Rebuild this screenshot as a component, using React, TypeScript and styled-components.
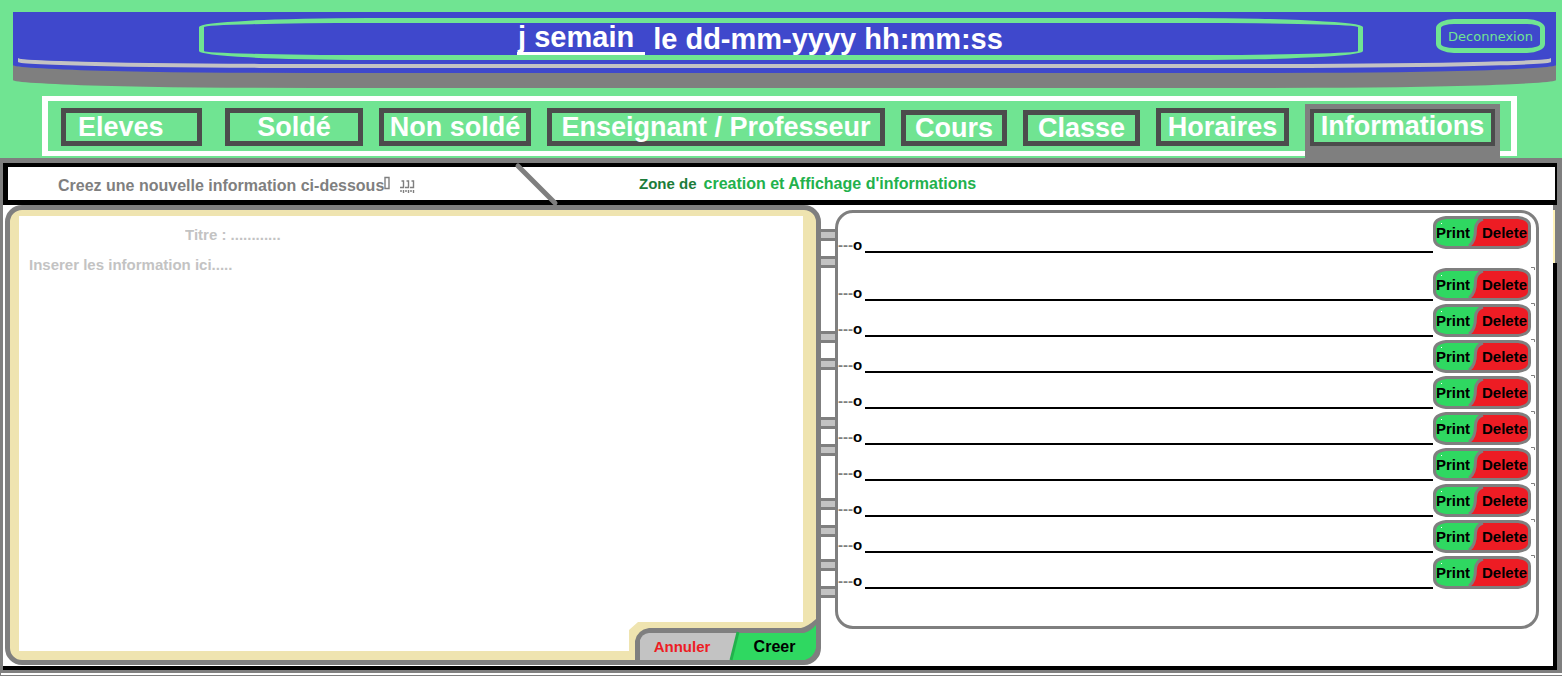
import React from "react";
import styled, { createGlobalStyle } from "styled-components";

const color = {
  mint: "#70e492",
  blue: "#3f48cc",
  grey: "#7f7f7f",
  silver: "#c3c3c3",
  frame: "#4c4c4c",
  cream: "#efe4b0",
  green: "#22b14c",
  darkGreen: "#1c7c3a",
  action: "#2fd861",
  red: "#ed1c24",
};

const GlobalStyle = createGlobalStyle`
  *, *::before, *::after { box-sizing: border-box; }
  body {
    margin: 0;
    font-family: "Liberation Sans", Arial, sans-serif;
    font-weight: bold;
    background: #fff;
  }
  button, input, textarea { font: inherit; }
`;

const Page = styled.div`
  display: flex;
  flex-direction: column;
  min-height: 100vh;
`;

const Header = styled.header`
  background: ${color.mint};
  padding: 12px 6px 2px 13px;
`;

const Banner = styled.div`
  position: relative;
  display: flex;
  align-items: flex-start;
  height: 61px;
  padding: 6px 11px 0 186px;
  gap: 73px;
  background: ${color.blue};
  border-radius: 0 0 300px 300px / 0 0 8px 8px;
  box-shadow: 0 15px 0 ${color.grey};

  &::before {
    content: "";
    position: absolute;
    inset: 0 5px 9px;
    border-radius: 0 0 300px 300px / 0 0 6px 6px;
    background: ${color.blue};
    box-shadow: 0 4px 0 ${color.silver};
  }
`;

const Clock = styled.time`
  position: relative;
  flex: 1;
  display: flex;
  justify-content: center;
  gap: 8px;
  height: 42px;
  padding-right: 42px;
  border: 5px solid ${color.mint};
  border-radius: 170px / 9px;
  color: #fff;
  font-size: 29px;
  line-height: 32px;
  white-space: nowrap;
`;

const Weekday = styled.span`
  height: 32px;
  padding: 0 11px 0 1px;
  border-bottom: 3px solid #fff;
  line-height: 28px;
`;

const Logout = styled.button`
  position: relative;
  width: 109px;
  height: 34px;
  margin-top: 1px;
  padding: 0;
  border: 5px solid ${color.mint};
  border-radius: 18px / 9px;
  background: none;
  color: ${color.mint};
  font: 13px "DejaVu Sans", sans-serif;
`;

const Nav = styled.nav`
  display: grid;
  grid-template-columns:
    minmax(0, 148fr) minmax(0, 138fr) minmax(0, 152fr) minmax(0, 338fr)
    minmax(0, 106fr) minmax(0, 117fr) minmax(0, 133fr) minmax(0, 195fr);
  align-items: end;
  gap: 16px;
  height: 60px;
  margin: 23px 39px 0 29px;
  padding: 0 11px 0 13px;
  border: 5px solid #fff;
  border-width: 5px 6px;
`;

const NavButton = styled.button<{ $short?: boolean; $start?: boolean }>`
  height: ${(p) => (p.$short ? 36 : 38)}px;
  margin: 0 ${(p) => (p.$start ? 7 : 0)}px 5px 0;
  padding: 0 0 0 ${(p) => (p.$start ? 12 : 0)}px;
  border: 5px solid ${color.frame};
  background: ${color.mint};
  color: #fff;
  font-size: 27px;
  line-height: 26px;
  text-align: ${(p) => (p.$start ? "left" : "center")};
  white-space: nowrap;
`;

const ActiveTab = styled.div`
  display: grid;
  margin-bottom: -7px;
  padding: 5px 5px 12px;
  background: ${color.grey};

  ${NavButton} {
    height: 37px;
    margin: 0;
    padding-bottom: 4px;
    border-width: 4px;
  }
`;

const Main = styled.main`
  flex: 1;
  display: flex;
  flex-direction: column;
  padding: 5px 5px 3px 3px;
  background: ${color.grey};
`;

const TitleBar = styled.div`
  display: flex;
  height: 42px;
  border: solid #000;
  border-width: 4px 2px 5px 5px;
  background: #fff;
  font-size: 16px;
  line-height: 33px;
  white-space: nowrap;
`;

const Hint = styled.div`
  display: flex;
  align-items: center;
  flex: 0 0 509px;
  padding: 3px 0 0 50px;
  color: ${color.grey};
`;

const HintArrows = styled.svg`
  width: 32px;
  height: 18px;
`;

const Slash = styled.svg`
  width: 40px;
  height: 33px;
  overflow: visible;
`;

const Zone = styled.h1`
  display: flex;
  gap: 7px;
  margin: 0 0 0 82px;
  color: ${color.green};
  font-size: 16px;
`;

const ZoneLead = styled.span`
  color: ${color.darkGreen};
  font-size: 15px;
`;

const Workspace = styled.div`
  position: relative;
  flex: 1;
  display: grid;
  grid-template-columns: 816fr 14px 704fr;
  padding: 0 14px 1px 2px;
  border: solid #000;
  border-width: 0 4px 4px 0;
  background: #fff;
`;

const ScrollMark = styled.div`
  position: absolute;
  top: 0;
  right: -4px;
  width: 4px;
  height: 58px;
  border: solid ${color.grey};
  border-width: 5px 2px 0 0;
  background: #fff3b8;
`;

const Editor = styled.form`
  position: relative;
  display: flex;
  padding: 6px 13px 9px 9px;
  border: 5px solid ${color.grey};
  border-radius: 17px;
  background: ${color.cream};
`;

const Sheet = styled.div`
  flex: 1;
  display: flex;
  flex-direction: column;
  padding: 3px 10px 0;
  background: #fff;
`;

const TitleInput = styled.input`
  height: 30px;
  padding: 0 0 0 156px;
  border: 0;
  outline: 0;
  background: none;
  font-size: 15px;
  &::placeholder { color: ${color.silver}; opacity: 1; }
`;

const BodyInput = styled.textarea`
  flex: 1;
  min-height: 200px;
  padding: 0;
  border: 0;
  outline: 0;
  resize: none;
  background: none;
  font-size: 15px;
  line-height: 32px;
  &::placeholder { color: ${color.silver}; opacity: 1; }
`;

const EditorActions = styled.div`
  position: absolute;
  right: 0;
  bottom: 0;
  display: flex;
  width: 187px;
  height: 40px;
  padding: 13px 0 0 11px;
`;

const Backdrop = styled.svg`
  position: absolute;
  inset: 0;
  width: 100%;
  height: 100%;
  overflow: visible;
`;

const FormButton = styled.button<{ $primary?: boolean }>`
  position: relative;
  width: ${(p) => (p.$primary ? 92 : 84)}px;
  height: 27px;
  padding: 0 0 0 ${(p) => (p.$primary ? 9 : 0)}px;
  border: 0;
  background: none;
  color: ${(p) => (p.$primary ? "#000" : color.red)};
  font-size: ${(p) => (p.$primary ? 16 : 15)}px;
`;

const Binding = styled.div`
  padding-top: 24px;
`;

const RingPair = styled.div<{ $after: number }>`
  display: flex;
  flex-direction: column;
  justify-content: space-between;
  height: 39px;
  margin-bottom: ${(p) => p.$after}px;
`;

const Ring = styled.span`
  height: 12px;
  border: solid ${color.grey};
  border-width: 3px 0;
  background: ${color.silver};
`;

const List = styled.ul`
  align-self: start;
  margin: 5px 0 0;
  padding: 0 5px 37px 0;
  border: 3px solid ${color.grey};
  border-radius: 18px;
  list-style: none;
`;

const Row = styled.li`
  display: flex;
  height: 36px;

  &:first-child {
    height: 40px;
    margin-bottom: 12px;
  }
`;

const Marker = styled.span`
  align-self: flex-end;
  width: 27px;
  color: #000;
  font-size: 15px;
  line-height: 16px;
`;

const Dashes = styled.span`
  color: ${color.grey};
`;

const Line = styled.span`
  flex: 1;
  border-bottom: 2px solid #000;
`;

const RowActions = styled.div`
  position: relative;
  display: flex;
  width: 98px;
  height: 33px;
  margin-top: 3px;
`;

const RowButton = styled.button<{ $wide?: boolean }>`
  position: relative;
  width: ${(p) => (p.$wide ? 58 : 40)}px;
  height: 33px;
  padding: 0 0 0 ${(p) => (p.$wide ? 5 : 0)}px;
  border: 0;
  background: none;
  color: #000;
  font-size: 15px;
  text-align: center;
`;

const Footer = styled.footer`
  height: 3px;
  border: solid ${color.grey};
  border-width: 0 0 1px 1px;
`;

const rings = [63, 47, 42, 22, 0];
const rows = Array.from({ length: 10 }, (_, i) => i);

const pillOutline = "M13 1.5H85Q96.5 3 96.5 10V23Q96.5 30 85 31.5H13Q1.5 30 1.5 23V10Q1.5 3 13 1.5Z";

function ActionPill({ tick }: { tick: boolean }) {
  return (
    <Backdrop viewBox="0 0 98 33" aria-hidden="true">
      <path d={pillOutline} fill={color.action} />
      <path d="M48 2H85Q96 3 96 10V23Q96 30 85 31H36Q42 27 42 18Q42 5 48 2Z" fill={color.red} />
      <path d="M50 3Q43 5 42.500 13Q42.500 26 36 30" fill="none" stroke={color.grey} strokeWidth="3" />
      <path d={pillOutline} fill="none" stroke={color.grey} strokeWidth="3" />
      <rect x="8" y="7" width="1" height="1" fill="#fff" />
      {tick && <path d="M98 -0.500H101.500V2" fill="none" stroke={color.grey} />}
    </Backdrop>
  );
}

export default function App() {
  return (
    <Page>
      <GlobalStyle />
      <Header>
        <Banner>
          <Clock>
            <Weekday>j semain</Weekday>
            <span>le dd-mm-yyyy hh:mm:ss</span>
          </Clock>
          <Logout type="button">Deconnexion</Logout>
        </Banner>
        <Nav>
          <NavButton $start>Eleves</NavButton>
          <NavButton>Soldé</NavButton>
          <NavButton>Non soldé</NavButton>
          <NavButton>Enseignant / Professeur</NavButton>
          <NavButton $short>Cours</NavButton>
          <NavButton $short>Classe</NavButton>
          <NavButton>Horaires</NavButton>
          <ActiveTab>
            <NavButton aria-current="page">Informations</NavButton>
          </ActiveTab>
        </Nav>
      </Header>

      <Main>
        <TitleBar>
          <Hint>
            Creez une nouvelle information ci-dessous
            <HintArrows viewBox="0 0 32 18" fill="none" stroke={color.grey} aria-hidden="true">
              <path d="M1 1.500h4v11h-4z" strokeWidth="1.4" />
              <path
                d="M16 11.500h3.500V5h-2M21 11.500h3.500V5h-2M26 11.500h3.500V5h-2M17 14v2M19.500 14v3M22 14v2M24.500 14v3M27 14v2M29.500 14v3"
                strokeWidth="1.4"
              />
            </HintArrows>
          </Hint>
          <Slash viewBox="0 0 40 33" aria-hidden="true">
            <path d="M1 -1L38 36" stroke={color.grey} strokeWidth="5" strokeLinecap="round" />
          </Slash>
          <Zone>
            <ZoneLead>Zone de</ZoneLead>
            <span>creation et Affichage d'informations</span>
          </Zone>
        </TitleBar>

        <Workspace>
          <ScrollMark />
          <Editor onSubmit={(e: React.FormEvent) => e.preventDefault()}>
            <Sheet>
              <TitleInput aria-label="Titre" placeholder="Titre : ............" />
              <BodyInput aria-label="Information" placeholder="Inserer les information ici....." />
            </Sheet>
            <EditorActions>
              <Backdrop viewBox="0 0 187 40" aria-hidden="true">
                <path d="M0 40V10L9 2H187V40Z" fill={color.cream} />
                <path d="M6 40V21Q8 10 20 8H172Q178 7 187 -1V40Z" fill={color.grey} />
                <path d="M11 40V20Q13 14 20 13H110L103 40Z" fill={color.silver} />
                <path d="M109 13H175Q182 11 187 5V28Q185 37 176 40H102Z" fill={color.action} />
                <path d="M109 12L102 40" stroke={color.green} strokeWidth="3" />
              </Backdrop>
              <FormButton type="reset">Annuler</FormButton>
              <FormButton type="submit" $primary>Creer</FormButton>
            </EditorActions>
          </Editor>

          <Binding>
            {rings.map((after, i) => (
              <RingPair key={i} $after={after}>
                <Ring />
                <Ring />
              </RingPair>
            ))}
          </Binding>

          <List>
            {rows.map((i) => (
              <Row key={i}>
                <Marker><Dashes>---</Dashes>o</Marker>
                <Line />
                <RowActions>
                  <ActionPill tick={i > 0} />
                  <RowButton type="button">Print</RowButton>
                  <RowButton type="button" $wide>Delete</RowButton>
                </RowActions>
              </Row>
            ))}
          </List>
        </Workspace>
      </Main>
      <Footer />
    </Page>
  );
}
